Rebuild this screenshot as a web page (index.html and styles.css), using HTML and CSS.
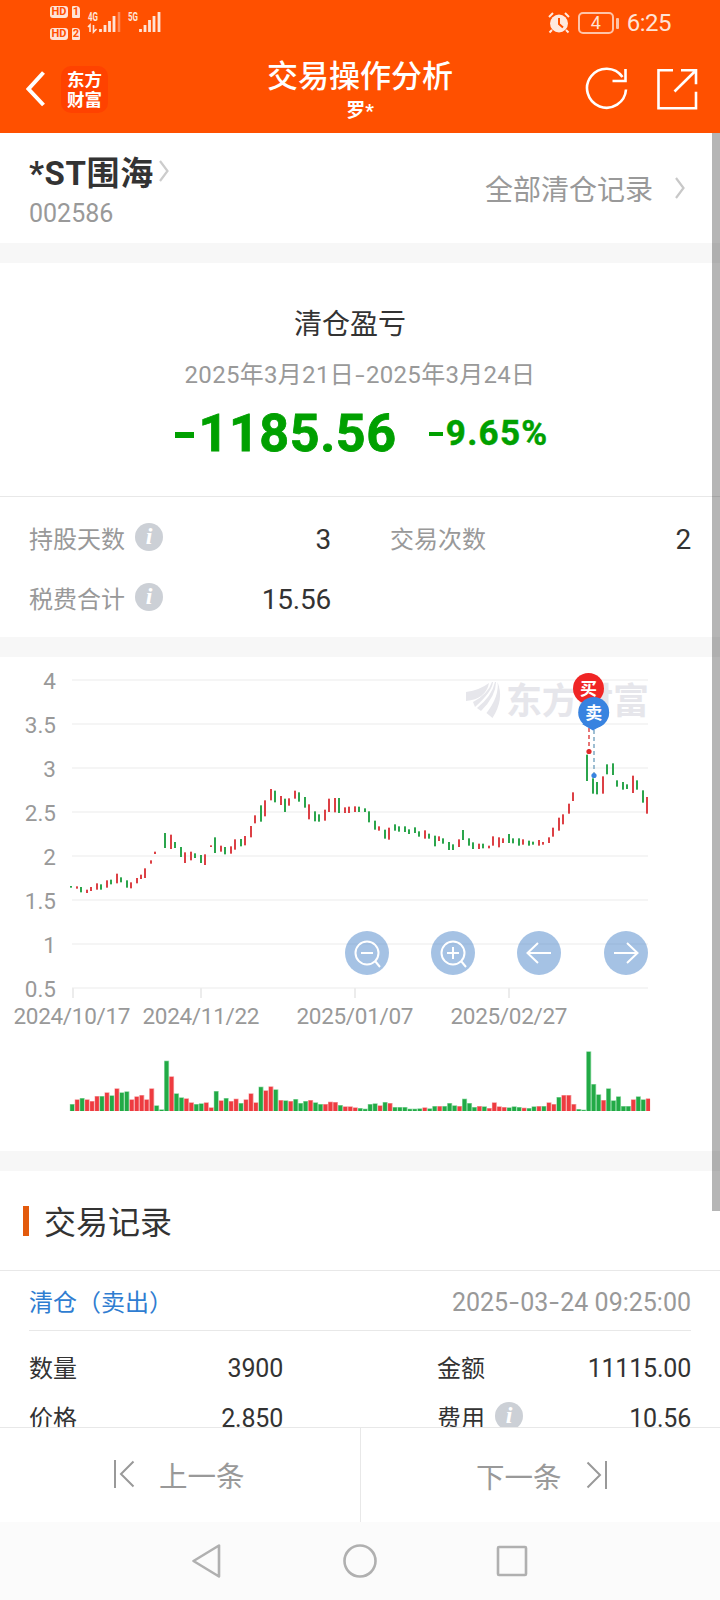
FILE: index.html
```html
<!DOCTYPE html>
<html lang="zh-CN">
<head>
    <meta charset="UTF-8">
    <meta name="viewport" content="width=device-width, initial-scale=1.0">
    <title>交易操作分析</title>
    <link rel="stylesheet" href="styles.css">
</head>
<body>
    <div class="app">
        <header class="topbar">
            <div class="statusbar">
                <div class="hd-list">
                    <div class="hd"><b>HD</b><i>1</i></div>
                    <div class="hd"><b>HD</b><i>2</i></div>
                </div>
                <svg class="signal" width="80" height="24" viewBox="86 10 80 24">
                    <text x="88" y="20.5" textLength="10" lengthAdjust="spacingAndGlyphs">4G</text>
                    <path d="M88 27l2-2v7M93.500 25v7l3-3" fill="none" stroke="#ffe3d6" stroke-width="1.600"/>
                    <path d="M100.500 29v3M105 25v7M109.500 21v11M114 16v16" stroke="#ffe3d6" stroke-width="2.800"/>
                    <path d="M119 12v20" stroke="#ff8a58" stroke-width="2.500"/>
                    <text x="128" y="20.500" textLength="10" lengthAdjust="spacingAndGlyphs">5G</text>
                    <path d="M140.500 29v3M145 25v7M149.500 20v12M154 16v16M159 12v20" stroke="#ffe3d6" stroke-width="2.800"/>
                </svg>
                <div class="status-right">
                    <svg width="22" height="22" viewBox="0 0 22 22">
                        <circle cx="11" cy="11.500" r="9" fill="#ffe9df"/>
                        <path d="M1 5l4-4M17 1l4 4M4 18l-2.500 2.500M18 18l2.500 2.500" stroke="#ffe9df" stroke-width="2"/>
                        <path d="M11 6v6l4 3.500" fill="none" stroke="#ff5000" stroke-width="2"/>
                    </svg>
                    <div class="battery">4</div>
                    <span class="battery-tip"></span>
                    <span class="clock">6:25</span>
                </div>
            </div>
            <div class="titlebar">
                <div class="title-left">
                    <svg width="20" height="36" viewBox="0 0 20 36"><path d="M17.500 1.500L2.500 18l15 16" fill="none" stroke="#fff" stroke-width="4"/></svg>
                    <div class="logo">东方<br>财富</div>
                </div>
                <div class="title-text">
                    <h1>交易操作分析</h1>
                    <p>罗*</p>
                </div>
                <div class="title-right">
                    <svg width="44" height="44" viewBox="585 67 44 44" fill="none" stroke="#fff" stroke-width="2.600">
                        <path d="M626 89.500A19.500 19.500 0 1 1 622.500 77"/>
                        <path d="M625.500 69v12h-13"/>
                    </svg>
                    <svg width="44" height="44" viewBox="655 67 44 44" fill="none" stroke="#fff" stroke-width="2.600">
                        <path d="M673 70.300h-14.500v38h37.500v-16.500M681 70.300h15v14M696 70.300L674.500 91.500"/>
                    </svg>
                </div>
            </div>
        </header>

        <main class="content">
            <section class="stock">
                <div>
                    <div class="stock-name">*ST围海<svg width="12" height="24" viewBox="0 0 12 24"><path d="M2 2l7.500 10L2 22" fill="none" stroke="#ccc" stroke-width="2.200"/></svg></div>
                    <div class="stock-code">002586</div>
                </div>
                <div class="all-records">全部清仓记录<svg width="12" height="24" viewBox="0 0 12 24"><path d="M2 2l7.500 10L2 22" fill="none" stroke="#c8c8c8" stroke-width="2.200"/></svg></div>
            </section>

            <section class="summary">
                <h2>清仓盈亏</h2>
                <p class="period">2025年3月21日<em>-</em>2025年3月24日</p>
                <div class="profit"><span class="amount"><em></em>1185.56</span><span class="rate"><em></em>9.65%</span></div>
            </section>

            <section class="stats">
                <div class="stat"><span>持股天数</span><i class="info">i</i><b>3</b></div>
                <div class="stat"><span>交易次数</span><b>2</b></div>
                <div class="stat"><span>税费合计</span><i class="info">i</i><b>15.56</b></div>
            </section>

            <section class="chart">
                <svg id="kline" width="720" height="494" viewBox="0 657 720 494">
                    <g id="grid"></g>
                    <g class="watermark">
                        <path d="M466 692q14-2 23-9q-3 16-23 18zM492 682h1q-1 10-18 25l-2-5q15-8 19-20zM495 682h1q0 14-15 29l-4-3q15-12 18-26zM497.500 682q7 17-5 36l-6-5q13-17 11-31z"/>
                        <text x="506" y="714" textLength="143">东方财富</text>
                    </g>
                    <g id="candles"></g>
                    <g id="volumes"></g>
                    <path d="M589 728v24" stroke="#e04848" stroke-width="1.500" stroke-dasharray="4 3"/>
                    <path d="M594 730v45" stroke="#7fa9c4" stroke-width="1.500" stroke-dasharray="4 3"/>
                    <circle cx="589" cy="751.500" r="2.600" fill="#e02a2a"/>
                    <circle cx="594" cy="775.500" r="2.600" fill="#3883e0"/>
                    <g class="pin">
                        <circle cx="588.500" cy="688.500" r="15.500" fill="#f02525"/>
                        <text x="588.500" y="694.500">买</text>
                        <path d="M582 724l11 6.500l11-6.500z" fill="#3883e0"/>
                        <circle cx="593.700" cy="712.500" r="15.500" fill="#3883e0"/>
                        <text x="593.700" y="718.500">卖</text>
                    </g>
                </svg>
                <div class="chart-tools">
                    <button><svg viewBox="0 0 44 44"><circle cx="22" cy="22" r="11.500"/><path d="M16 22h12M30 30l5 6"/></svg></button>
                    <button><svg viewBox="0 0 44 44"><circle cx="22" cy="22" r="11.500"/><path d="M16 22h12M22 16v12M30 30l5 6"/></svg></button>
                    <button><svg viewBox="0 0 44 44"><path d="M34 22H10.500M21 12L10.500 22L21 32"/></svg></button>
                    <button><svg viewBox="0 0 44 44"><path d="M10 22h23.500M23 12l10.500 10L23 32"/></svg></button>
                </div>
            </section>

            <section class="records">
                <h2><span>交易记录</span></h2>
                <div class="record">
                    <div class="record-head"><span>清仓（卖出）</span><time>2025<em>-</em>03<em>-</em>24 09:25:00</time></div>
                    <div class="record-body">
                        <div class="cell"><span>数量</span><b>3900</b></div>
                        <div class="cell"><span>金额</span><b>11115.00</b></div>
                        <div class="cell"><span>价格</span><b>2.850</b></div>
                        <div class="cell"><span>费用</span><i class="info">i</i><b>10.56</b></div>
                    </div>
                </div>
            </section>
            <div class="scrollbar"></div>
        </main>

        <footer class="pager">
            <div class="prev"><svg width="22" height="30" viewBox="0 0 22 30"><path d="M2 1v28M20.500 2.500L8 15l12.500 12.500"/></svg>上一条</div>
            <div class="next">下一条<svg width="22" height="30" viewBox="0 0 22 30"><path d="M20 1v28M1.500 2.500L14 15L1.500 27.500"/></svg></div>
        </footer>
        <nav class="sysnav">
            <svg width="32" height="36" viewBox="0 0 32 36"><path d="M1.500 18L27 2.500v31z"/></svg>
            <svg width="36" height="36" viewBox="0 0 36 36"><circle cx="18" cy="18" r="15.500"/></svg>
            <svg width="32" height="32" viewBox="0 0 32 32"><rect x="2" y="2" width="28" height="28" rx="1"/></svg>
        </nav>
    </div>
    <script src="chart.js"></script>
</body>
</html>
```
FILE: styles.css
```css
* {
    box-sizing: border-box;
    margin: 0;
    padding: 0;
}

body {
    font-family: Roboto, "Noto Sans CJK SC", sans-serif;
    background-color: #fff;
    color: #333;
}

em, i {
    font-style: normal;
}

b {
    font-weight: normal;
}

svg {
    display: block;
}

.app {
    display: flex;
    flex-direction: column;
    width: 720px;
    height: 1600px;
    overflow: hidden;
}

/* top */
.topbar {
    height: 133px;
    background-color: #ff5000;
    color: #fff;
}

.statusbar {
    display: flex;
    align-items: flex-start;
    height: 45px;
    padding-left: 50px;
}

.hd-list {
    display: flex;
    flex-direction: column;
    gap: 10px;
    width: 36px;
    padding-top: 6px;
}

.hd {
    display: flex;
    gap: 4px;
    height: 12px;
    line-height: 12px;
    font-size: 11px;
    text-align: center;
    color: #ff5000;
}

.hd b {
    width: 18px;
    border-radius: 3px;
    background-color: #ffe3d6;
    font-weight: bold;
}

.hd i {
    width: 8px;
    border-radius: 1px 4px 1px 1px;
    background-color: #ffe3d6;
    font-weight: bold;
}

.signal {
    margin-top: 10px;
}

.signal text {
    font-size: 12px;
    font-weight: bold;
    fill: #ffe3d6;
}

.status-right {
    display: flex;
    align-items: center;
    margin-left: auto;
    margin-top: 11px;
    padding-right: 49px;
    height: 24px;
    color: #ffe3d6;
}

.battery {
    width: 36px;
    height: 22px;
    margin-left: 8px;
    border: 2px solid #ffc3a8;
    border-radius: 5px;
    font-size: 18px;
    line-height: 18px;
    text-align: center;
}

.battery-tip {
    width: 3px;
    height: 11px;
    margin-left: 2px;
    border-radius: 1px;
    background-color: #ffc3a8;
}

.clock {
    margin-left: 8px;
    font-size: 24px;
    line-height: 24px;
    letter-spacing: -0.5px;
}

.titlebar {
    display: grid;
    grid-template-columns: 1fr auto 1fr;
    height: 88px;
}

.title-left {
    display: flex;
    align-items: center;
    gap: 14px;
    padding-left: 26px;
}

.logo {
    width: 47px;
    height: 47px;
    margin-left: 1px;
    padding-top: 3px;
    border-radius: 10px;
    background-color: #ff4200;
    font-family: "Noto Sans CJK SC", sans-serif;
    font-size: 17.5px;
    font-weight: bold;
    line-height: 20px;
    text-align: center;
}

.title-text {
    text-align: center;
}

.title-text h1 {
    margin-top: 11px;
    font-size: 31px;
    font-weight: 500;
    line-height: 42px;
}

.title-text p {
    margin-top: 1px;
    font-size: 19px;
    font-weight: bold;
    line-height: 24px;
}

.title-right {
    display: flex;
    justify-content: flex-end;
    align-items: center;
    gap: 26px;
    padding-right: 21px;
}

/* scrolled page */
.content {
    position: relative;
    height: 1294px;
    overflow: hidden;
}

.scrollbar {
    position: absolute;
    top: 0;
    right: 0;
    width: 8px;
    height: 1078px;
    background-color: rgba(0, 0, 0, 0.29);
}

.stock {
    display: flex;
    justify-content: space-between;
    height: 130px;
    padding: 16px 34px 0 29px;
    border-bottom: 20px solid #f7f7f7;
}

.stock-name {
    display: flex;
    align-items: center;
    height: 44px;
    font-size: 33px;
    font-weight: bold;
    letter-spacing: 0.6px;
}

.stock-name svg {
    margin: -1px 0 0 4px;
}

.stock-code {
    margin-top: 3px;
    font-size: 25px;
    line-height: 36px;
    color: #999;
}

.all-records {
    display: flex;
    align-items: center;
    height: 78px;
    font-size: 28px;
    color: #999;
}

.all-records svg {
    margin-left: 21px;
}

.summary {
    height: 234px;
    padding-top: 42px;
    border-bottom: 1px solid #e8e8e8;
    text-align: center;
}

.summary h2 {
    padding-right: 20px;
    font-size: 28px;
    font-weight: normal;
    line-height: 40px;
}

.period {
    margin-top: 13px;
    font-size: 24px;
    line-height: 34px;
    letter-spacing: 0.3px;
    color: #999;
}

.period em,
.record-head em {
    display: inline-block;
    width: 12px;
    text-align: center;
    transform: scaleX(1.4);
}

.profit {
    display: flex;
    justify-content: center;
    align-items: center;
    gap: 32px;
    margin-top: 11px;
    height: 60px;
    padding-left: 4px;
    font-weight: bold;
    color: #00a000;
}

.profit span {
    display: flex;
    align-items: center;
}

.profit em {
    background-color: #00a000;
}

.amount {
    font-size: 52px;
    letter-spacing: 0.6px;
    -webkit-text-stroke: 0.8px #00a000;
}

.amount em {
    width: 19px;
    height: 6px;
    margin: 4px 4px 0 0;
}

.rate {
    font-size: 35px;
    letter-spacing: 1.3px;
    -webkit-text-stroke: 0.5px #00a000;
}

.rate em {
    width: 14px;
    height: 4px;
    margin: 2px 3px 0 0;
}

.stats {
    display: grid;
    grid-template-columns: 302px 301px;
    column-gap: 59px;
    grid-auto-rows: 60px;
    height: 160px;
    padding: 12px 0 0 29px;
    border-bottom: 20px solid #f7f7f7;
}

.stat,
.cell {
    display: flex;
    align-items: center;
    font-size: 24px;
}

.stat {
    color: #999;
}

.stat span,
.cell span {
    margin-top: -4px;
}

.stat b {
    margin-left: auto;
    font-size: 28px;
    letter-spacing: -0.2px;
    color: #333;
}

.info {
    width: 28px;
    height: 28px;
    margin: -4px 0 0 10px;
    border-radius: 50%;
    background-color: #ccd0d6;
    color: #fff;
    font: italic bold 24px/27px "Liberation Serif", serif;
    text-align: center;
}

/* chart */
.chart {
    position: relative;
    height: 514px;
    border-bottom: 20px solid #f7f7f7;
}

#kline text {
    font-size: 22.5px;
    fill: #999;
}

#kline .watermark {
    fill: #e6e6eb;
}

#kline .watermark text {
    font-size: 36px;
    font-weight: bold;
    fill: #e6e6eb;
}

#kline .pin text {
    font-size: 17px;
    font-weight: bold;
    text-anchor: middle;
    fill: #fff;
}

.chart-tools {
    position: absolute;
    top: 274px;
    left: 345px;
    display: flex;
    gap: 42px;
}

.chart-tools button {
    width: 44px;
    height: 44px;
    border: none;
    border-radius: 50%;
    background-color: rgba(75, 133, 201, 0.5);
}

.chart-tools button:last-child {
    margin-left: 1px;
}

.chart-tools svg {
    fill: none;
    stroke: #fff;
    stroke-width: 2;
}

/* records */
.records h2 {
    display: flex;
    align-items: center;
    height: 100px;
    padding-left: 23px;
    border-bottom: 1px solid #e8e8e8;
    font-size: 32px;
    font-weight: normal;
}

.records h2::before {
    content: "";
    width: 6px;
    height: 30px;
    margin-right: 15px;
    background-color: #e35a0c;
}

.records h2 span {
    margin-top: -2px;
}

.record {
    padding: 0 29px;
}

.record-head {
    display: flex;
    justify-content: space-between;
    align-items: center;
    height: 60px;
    padding-top: 2px;
    border-bottom: 1px solid #e8e8e8;
    font-size: 24px;
    color: #2f7dd1;
}

.record-head span {
    margin-top: -3px;
}

.record-head time {
    padding-top: 1px;
    font-size: 25px;
    color: #999;
}

.record-body {
    display: grid;
    grid-template-columns: 254px 254px;
    justify-content: space-between;
    grid-auto-rows: 50px;
    padding-top: 12px;
}

.cell b {
    margin-left: auto;
    padding-top: 1px;
    font-size: 25px;
    letter-spacing: -0.2px;
}

/* bottom */
.pager {
    display: flex;
    height: 95px;
    padding-bottom: 2px;
    border-top: 1px solid #e8e8e8;
    font-size: 28.5px;
    color: #999;
}

.pager div {
    display: flex;
    align-items: center;
    width: 50%;
    gap: 24px;
}

.pager .prev {
    padding-left: 113px;
}

.pager .next {
    height: 94px;
    padding-left: 115px;
    border-left: 1px solid #e8e8e8;
}

.pager svg {
    fill: none;
    stroke: #999;
    stroke-width: 2;
}

.sysnav {
    display: flex;
    justify-content: center;
    align-items: center;
    gap: 118px;
    height: 78px;
    background-color: #fbfbfb;
}

.sysnav svg {
    fill: none;
    stroke: #b0b0b0;
    stroke-width: 2.6;
    stroke-linejoin: round;
}
```
FILE: chart.js
```js
// color, high, low, volume top (thirds of a pixel), 0 = no candle drawn
const days = `
g708,713,222 r709,716,208 g711,727,204 r719,729,208 r711,723,213 r700,719,198 g703,719,198 r691,713,187
g689,703,196 r671,700,175 g682,697,187 g691,713,184 r697,715,208 r684,700,199 r674,687,195 r655,684,208
r631,641,175 r605,612,226 g0,0,238 g549,594,92 r554,597,139 g576,594,190 g591,621,202 r607,639,205
r605,631,217 g610,624,222 g615,639,220 r613,645,217 r586,591,232 g562,609,183 r587,605,211 g591,613,204
r589,611,213 r568,599,206 g567,589,219 r558,586,208 r528,562,190 r496,520,217 g466,515,170 r451,499,181
r417,451,169 g422,457,178 r438,465,210 g446,486,211 r445,467,213 r422,446,207 g427,455,219 g441,473,213
r463,508,210 g484,514,217 g493,515,222 r479,512,222 r446,486,215 r444,487,216 g444,489,225 r472,489,229
r470,489,229 r469,486,232 g470,486,234 g475,486,236 g484,517,222 g512,539,220 r529,542,226 g539,566,216
r533,569,219 g523,542,231 g529,545,231 g529,546,231 g538,552,236 g532,549,236 g544,560,235 r541,566,232
g551,566,235 g557,589,228 r559,573,228 g565,581,228 g576,600,219 g583,600,226 r568,591,228 g540,570,206
g565,587,219 g577,597,231 r581,597,228 g581,595,229 r587,595,234 r559,587,217 r562,592,229 r565,579,231
g552,579,232 g565,580,229 g565,587,231 r568,584,233 g572,587,234 g575,584,229 r570,587,228 r576,584,228
r562,579,217 r533,560,222 r503,542,201 r493,523,195 r461,491,195 r427,453,222 g0,0,237 g0,0,239
g314,393,64 g385,431,162 g396,433,193 r379,431,210 g343,373,175 g340,375,211 g391,410,199 g396,419,228
g403,417,228 r377,429,208 g391,419,199 g421,458,208 r441,491,205`.trim().split(/\s+/);

// volume bars whose color differs from the candle
const volumeColors = { 17: "g", 45: "g", 95: "g", 98: "g" };

const step = 4.966;
const candleColor = { r: "#dc4045", g: "#2ba54c" };
const volumeColor = { r: "#ee3b40", g: "#22aa46" };
const edgeColor = { r: "#f5a0a3", g: "#8fd9a4" };

let candles = "";
let volumes = "";
days.forEach((day, i) => {
    const color = day[0];
    const [high, low, top] = day.slice(1).split(",").map(Number);
    if (high) {
        const x = 2 * Math.round((70.49 + i * step) / 2);
        const y = 650 + high / 3;
        candles += `<rect x="${x}" y="${y}" width="2" height="${(low - high) / 3}" fill="${candleColor[color]}"/>`;
    }
    const vc = volumeColors[i] || color;
    const vx = 69.8 + i * step;
    const vy = 1030 + top / 3;
    const vh = 1111 - vy;
    volumes += `<rect x="${vx}" y="${vy}" width="${i == 116 ? 4.2 : step}" height="${vh}" fill="${edgeColor[vc]}"/>`;
    volumes += `<rect x="${vx + 0.5}" y="${vy + 0.6}" width="3.7" height="${Math.max(vh - 0.6, 0.5)}" fill="${volumeColor[vc]}"/>`;
});
document.getElementById("candles").innerHTML = candles;
document.getElementById("volumes").innerHTML = volumes;

let grid = "";
["4", "3.5", "3", "2.5", "2", "1.5", "1", "0.5"].forEach((label, i) => {
    const y = 680 + i * 44;
    grid += `<path d="M72 ${y}H648" stroke="#f5f5f5" stroke-width="2"/>`;
    grid += `<text x="56" y="${y + 8.5}" text-anchor="end">${label}</text>`;
});
[["2024/10/17", 73, 72], ["2024/11/22", 201, 201], ["2025/01/07", 355, 355], ["2025/02/27", 509, 509]].forEach(([label, x, cx]) => {
    grid += `<path d="M${x} 988v10" stroke="#ececec" stroke-width="2"/>`;
    grid += `<text x="${cx - 58.5}" y="1023.5" textLength="117">${label}</text>`;
});
document.getElementById("grid").innerHTML = grid;
```
